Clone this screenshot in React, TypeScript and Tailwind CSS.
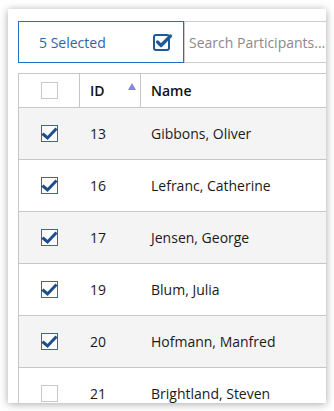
import React from "react";

type Participant = {
  id: number;
  name: string;
  selected: boolean;
};

const participants: Participant[] = [
  { id: 13, name: "Gibbons, Oliver", selected: true },
  { id: 16, name: "Lefranc, Catherine", selected: true },
  { id: 17, name: "Jensen, George", selected: true },
  { id: 19, name: "Blum, Julia", selected: true },
  { id: 20, name: "Hofmann, Manfred", selected: true },
  { id: 21, name: "Brightland, Steven", selected: false },
];

const RowCheckbox = ({ checked }: { checked: boolean }) => (
  <div
    className={`relative w-[17px] h-[17px] border bg-white ${
      checked ? "border-[#1f6fc0]" : "border-[#c9c9c9]"
    }`}
  >
    {checked && (
      <svg
        viewBox="0 0 17 17"
        className="absolute left-[-1px] top-[-1px] w-[17px] h-[17px]"
      >
        <path
          d="M2.5 9.5 L6.5 13 L14.5 4.5"
          fill="none"
          stroke="#1d4f8c"
          strokeWidth="3"
          strokeLinecap="square"
        />
      </svg>
    )}
  </div>
);

const SelectedIcon = () => (
  <svg viewBox="0 0 20 18" className="w-[20px] h-[18px]">
    <rect
      x="1"
      y="2"
      width="15"
      height="15"
      rx="2"
      fill="none"
      stroke="#1f5a98"
      strokeWidth="2"
    />
    <path
      d="M4.5 9 L8 12.5 L17.5 3"
      fill="none"
      stroke="#1f5a98"
      strokeWidth="3.2"
      strokeLinecap="round"
      strokeLinejoin="round"
    />
  </svg>
);

const App = () => {
  return (
    <div
      className="w-[334px] h-[411px] bg-white pl-[8px] pr-[8px] pt-[9px]"
      style={{ fontFamily: '"Open Sans", "Noto Sans", sans-serif' }}
    >
      <div className="h-[394px] overflow-hidden bg-white shadow-[0_1px_8px_rgba(0,0,0,0.35)] pl-[10px] pt-[12px]">
        <div className="flex h-[42px] w-[340px]">
          <div className="w-[166px] shrink-0 flex items-center justify-between border border-[#1f72c4] pl-[20px] pr-[10px]">
            <span className="text-[14px] text-[#2a67a8]">5 Selected</span>
            <SelectedIcon />
          </div>
          <div className="flex-1 flex items-center border border-[#cccccc] pl-[4px]">
            <span className="text-[14px] text-[#8a8a8a] whitespace-nowrap">
              Search Participants...
            </span>
          </div>
        </div>

        <div className="mt-[10px] w-[330px] border-l border-[#c6c6c6]">
          <div className="grid grid-cols-[61px_61px_1fr] h-[35px] border-t border-b border-[#c6c6c6] bg-white">
            <div className="flex items-center justify-center border-r border-[#c6c6c6]">
              <RowCheckbox checked={false} />
            </div>
            <div className="relative flex items-center pl-[10px] border-r border-[#c6c6c6] text-[14px] font-semibold text-[#111]">
              ID
              <div className="absolute right-[4px] top-[9px] w-0 h-0 border-l-[4px] border-r-[4px] border-b-[7px] border-l-transparent border-r-transparent border-b-[#8585e6]" />
            </div>
            <div className="flex items-center pl-[10px] text-[14px] font-semibold text-[#111]">
              Name
            </div>
          </div>

          {participants.map((p, i) => (
            <div
              key={p.id}
              className={`grid grid-cols-[61px_61px_1fr] h-[52px] border-b border-[#c6c6c6] text-[14px] text-[#1a1a1a] ${
                i % 2 === 0 ? "bg-[#f4f4f4]" : "bg-white"
              }`}
            >
              <div className="flex items-center justify-center">
                <RowCheckbox checked={p.selected} />
              </div>
              <div className="flex items-center pl-[10px]">{p.id}</div>
              <div className="flex items-center pl-[10px] whitespace-nowrap">
                {p.name}
              </div>
            </div>
          ))}
        </div>
      </div>
    </div>
  );
};

export default App;
